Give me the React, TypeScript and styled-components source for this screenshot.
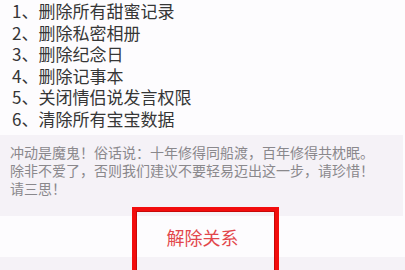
import styled, { createGlobalStyle } from "styled-components";

const GlobalStyle = createGlobalStyle`
  html, body {
    margin: 0;
    padding: 0;
    background-color: #fdfcfe;
    font-family: "Noto Sans CJK SC", "Noto Sans", sans-serif;
  }
`;

const Page = styled.div`
  width: 405px;
  height: 270px;
  overflow: hidden;
  display: flex;
  flex-direction: column;
`;

const ListSection = styled.ol`
  list-style: none;
  margin: 0;
  padding: 0 0 0 12px;
  height: 135px;
  box-sizing: border-box;
  background-color: #fdfcfe;
`;

const ListItem = styled.li`
  font-size: 17px;
  line-height: 21.6px;
  color: #363636;
  white-space: nowrap;
`;

const Notice = styled.div`
  height: 81px;
  box-sizing: border-box;
  padding: 8px 10px 0 10px;
  margin-right: 2px;
  background-color: #f5f2f7;
  font-size: 14px;
  line-height: 18px;
  color: #8a888c;
  white-space: nowrap;
`;

const ButtonRow = styled.div`
  position: relative;
  height: 41px;
  display: flex;
  align-items: center;
  justify-content: center;
  background-color: #fdfcfe;
`;

const DangerButton = styled.button`
  border: none;
  background: none;
  padding: 0;
  margin-top: 1px;
  font-family: inherit;
  font-size: 18px;
  color: #e2474b;
  cursor: pointer;
`;

// annotation frame drawn over the button
const Highlight = styled.div`
  position: absolute;
  left: 132px;
  top: -9px;
  width: 147px;
  height: 70px;
  box-sizing: border-box;
  border: 4px solid #f20d0d;
  box-shadow: inset 0 0 0 1px #c80808;
  pointer-events: none;
`;

const Footer = styled.div`
  flex: 1;
  background-color: #f5f2f7;
`;

const steps = [
  "删除所有甜蜜记录",
  "删除私密相册",
  "删除纪念日",
  "删除记事本",
  "关闭情侣说发言权限",
  "清除所有宝宝数据",
];

export default function App() {
  return (
    <>
      <GlobalStyle />
      <Page>
        <ListSection>
          {steps.map((s, i) => (
            <ListItem key={s}>
              {i + 1}、{s}
            </ListItem>
          ))}
        </ListSection>
        <Notice>
          冲动是魔鬼！俗话说：十年修得同船渡，百年修得共枕眠。
          <br />
          除非不爱了，否则我们建议不要轻易迈出这一步，请珍惜！
          <br />
          请三思！
        </Notice>
        <ButtonRow>
          <DangerButton>解除关系</DangerButton>
          <Highlight />
        </ButtonRow>
        <Footer />
      </Page>
    </>
  );
}
